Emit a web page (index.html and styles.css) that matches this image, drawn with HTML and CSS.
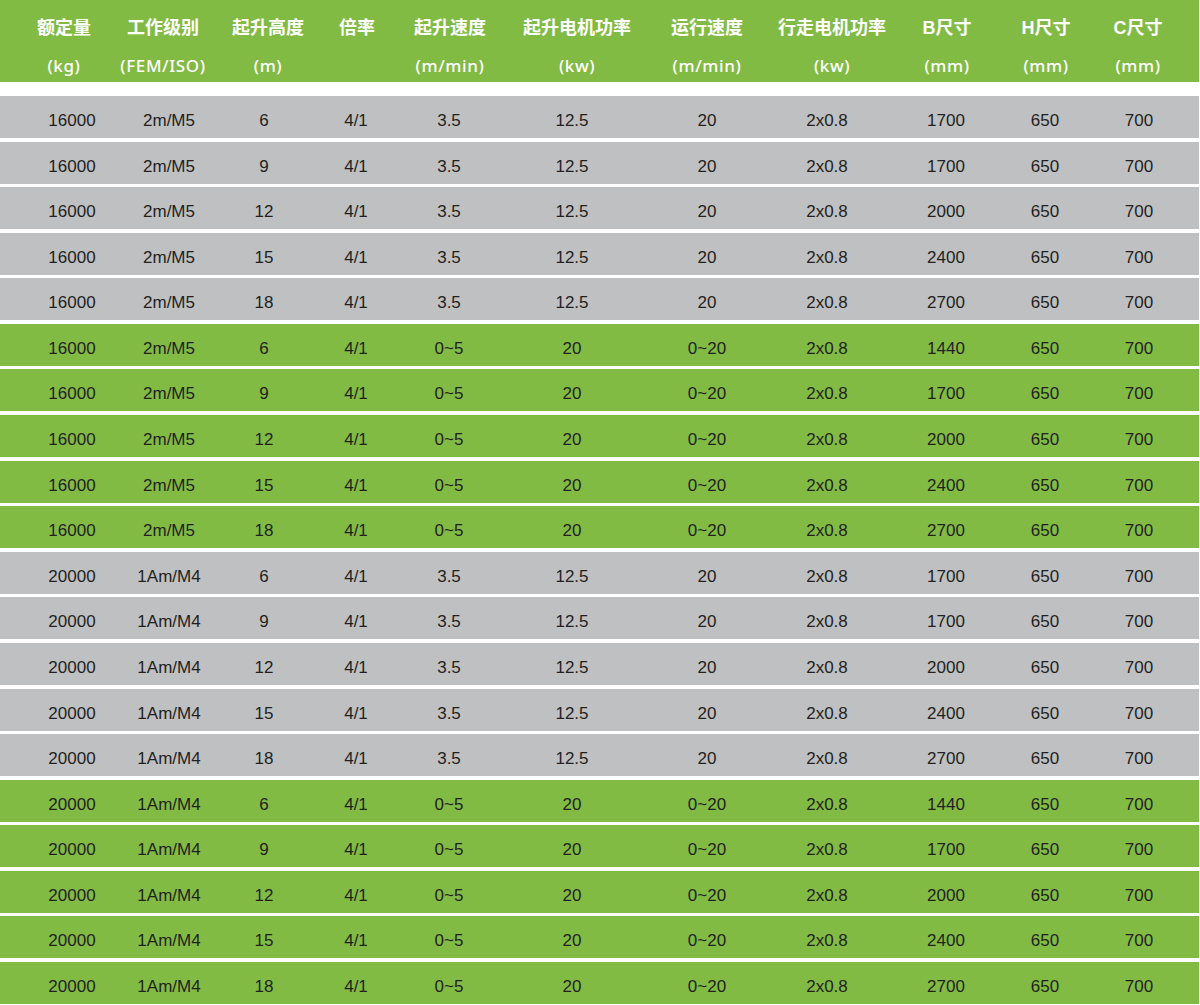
FILE: index.html
```html
<!DOCTYPE html>
<html lang="zh-CN">
<head>
<meta charset="utf-8">
<title>参数表</title>
<link rel="stylesheet" href="styles.css">
</head>
<body>
<div class="table">
  <div class="head">
    <div class="hcell"><div class="l1">额定量</div><div class="l2">(kg)</div></div>
    <div class="hcell"><div class="l1">工作级别</div><div class="l2">(FEM/ISO)</div></div>
    <div class="hcell"><div class="l1">起升高度</div><div class="l2">(m)</div></div>
    <div class="hcell"><div class="l1">倍率</div><div class="l2"></div></div>
    <div class="hcell"><div class="l1">起升速度</div><div class="l2">(m/min)</div></div>
    <div class="hcell"><div class="l1">起升电机功率</div><div class="l2">(kw)</div></div>
    <div class="hcell"><div class="l1">运行速度</div><div class="l2">(m/min)</div></div>
    <div class="hcell"><div class="l1">行走电机功率</div><div class="l2">(kw)</div></div>
    <div class="hcell"><div class="l1">B尺寸</div><div class="l2">(mm)</div></div>
    <div class="hcell"><div class="l1">H尺寸</div><div class="l2">(mm)</div></div>
    <div class="hcell"><div class="l1">C尺寸</div><div class="l2">(mm)</div></div>
  </div>
  <div class="body">
    <div class="row gray"><span>16000</span><span>2m/M5</span><span>6</span><span>4/1</span><span>3.5</span><span>12.5</span><span>20</span><span>2x0.8</span><span>1700</span><span>650</span><span>700</span></div>
    <div class="row gray"><span>16000</span><span>2m/M5</span><span>9</span><span>4/1</span><span>3.5</span><span>12.5</span><span>20</span><span>2x0.8</span><span>1700</span><span>650</span><span>700</span></div>
    <div class="row gray"><span>16000</span><span>2m/M5</span><span>12</span><span>4/1</span><span>3.5</span><span>12.5</span><span>20</span><span>2x0.8</span><span>2000</span><span>650</span><span>700</span></div>
    <div class="row gray"><span>16000</span><span>2m/M5</span><span>15</span><span>4/1</span><span>3.5</span><span>12.5</span><span>20</span><span>2x0.8</span><span>2400</span><span>650</span><span>700</span></div>
    <div class="row gray"><span>16000</span><span>2m/M5</span><span>18</span><span>4/1</span><span>3.5</span><span>12.5</span><span>20</span><span>2x0.8</span><span>2700</span><span>650</span><span>700</span></div>
    <div class="row green"><span>16000</span><span>2m/M5</span><span>6</span><span>4/1</span><span>0~5</span><span>20</span><span>0~20</span><span>2x0.8</span><span>1440</span><span>650</span><span>700</span></div>
    <div class="row green"><span>16000</span><span>2m/M5</span><span>9</span><span>4/1</span><span>0~5</span><span>20</span><span>0~20</span><span>2x0.8</span><span>1700</span><span>650</span><span>700</span></div>
    <div class="row green"><span>16000</span><span>2m/M5</span><span>12</span><span>4/1</span><span>0~5</span><span>20</span><span>0~20</span><span>2x0.8</span><span>2000</span><span>650</span><span>700</span></div>
    <div class="row green"><span>16000</span><span>2m/M5</span><span>15</span><span>4/1</span><span>0~5</span><span>20</span><span>0~20</span><span>2x0.8</span><span>2400</span><span>650</span><span>700</span></div>
    <div class="row green"><span>16000</span><span>2m/M5</span><span>18</span><span>4/1</span><span>0~5</span><span>20</span><span>0~20</span><span>2x0.8</span><span>2700</span><span>650</span><span>700</span></div>
    <div class="row gray"><span>20000</span><span>1Am/M4</span><span>6</span><span>4/1</span><span>3.5</span><span>12.5</span><span>20</span><span>2x0.8</span><span>1700</span><span>650</span><span>700</span></div>
    <div class="row gray"><span>20000</span><span>1Am/M4</span><span>9</span><span>4/1</span><span>3.5</span><span>12.5</span><span>20</span><span>2x0.8</span><span>1700</span><span>650</span><span>700</span></div>
    <div class="row gray"><span>20000</span><span>1Am/M4</span><span>12</span><span>4/1</span><span>3.5</span><span>12.5</span><span>20</span><span>2x0.8</span><span>2000</span><span>650</span><span>700</span></div>
    <div class="row gray"><span>20000</span><span>1Am/M4</span><span>15</span><span>4/1</span><span>3.5</span><span>12.5</span><span>20</span><span>2x0.8</span><span>2400</span><span>650</span><span>700</span></div>
    <div class="row gray"><span>20000</span><span>1Am/M4</span><span>18</span><span>4/1</span><span>3.5</span><span>12.5</span><span>20</span><span>2x0.8</span><span>2700</span><span>650</span><span>700</span></div>
    <div class="row green"><span>20000</span><span>1Am/M4</span><span>6</span><span>4/1</span><span>0~5</span><span>20</span><span>0~20</span><span>2x0.8</span><span>1440</span><span>650</span><span>700</span></div>
    <div class="row green"><span>20000</span><span>1Am/M4</span><span>9</span><span>4/1</span><span>0~5</span><span>20</span><span>0~20</span><span>2x0.8</span><span>1700</span><span>650</span><span>700</span></div>
    <div class="row green"><span>20000</span><span>1Am/M4</span><span>12</span><span>4/1</span><span>0~5</span><span>20</span><span>0~20</span><span>2x0.8</span><span>2000</span><span>650</span><span>700</span></div>
    <div class="row green"><span>20000</span><span>1Am/M4</span><span>15</span><span>4/1</span><span>0~5</span><span>20</span><span>0~20</span><span>2x0.8</span><span>2400</span><span>650</span><span>700</span></div>
    <div class="row green"><span>20000</span><span>1Am/M4</span><span>18</span><span>4/1</span><span>0~5</span><span>20</span><span>0~20</span><span>2x0.8</span><span>2700</span><span>650</span><span>700</span></div>
  </div>
</div>
</body>
</html>
```
FILE: styles.css
```css
html, body {
  margin: 0;
  padding: 0;
  background: #ffffff;
}
body {
  font-family: "Liberation Sans", Arial, "Noto Sans CJK SC", sans-serif;
  color: #231f20;
}
.table {
  width: 1199px;
  display: flex;
  flex-direction: column;
}
.head {
  height: 82px;
  box-sizing: border-box;
  padding: 10px 0 0 14px;
  background: #82bb44;
  display: grid;
  grid-template-columns: 100px 98px 112px 66px 120px 134px 126px 124px 106px 92px 92px;
  color: #ffffff;
  overflow: hidden;
}
.hcell {
  text-align: center;
  white-space: nowrap;
}
.l1 {
  font-family: "Liberation Sans", "Noto Sans CJK SC", sans-serif;
  font-weight: 700;
  font-size: 18px;
  line-height: 37px;
  height: 37px;
}
.l2 {
  font-family: "Noto Sans", "Noto Sans CJK SC", sans-serif;
  font-weight: 500;
  font-size: 17px;
  letter-spacing: 0.6px;
  line-height: 37px;
  height: 35px;
}
.body {
  margin-top: 14px;
  display: flex;
  flex-direction: column;
  gap: 3.58px;
}
.row {
  height: 42px;
  box-sizing: border-box;
  padding: 8px 0 0 27px;
  display: grid;
  grid-template-columns: 90px 104px 86px 98px 88px 158px 112px 128px 110px 88px 100px;
  font-size: 17px;
  line-height: 34px;
}
.row span {
  text-align: center;
  white-space: nowrap;
}
.gray {
  background: #bfc0c2;
}
.green {
  background: #82bb44;
}
```
